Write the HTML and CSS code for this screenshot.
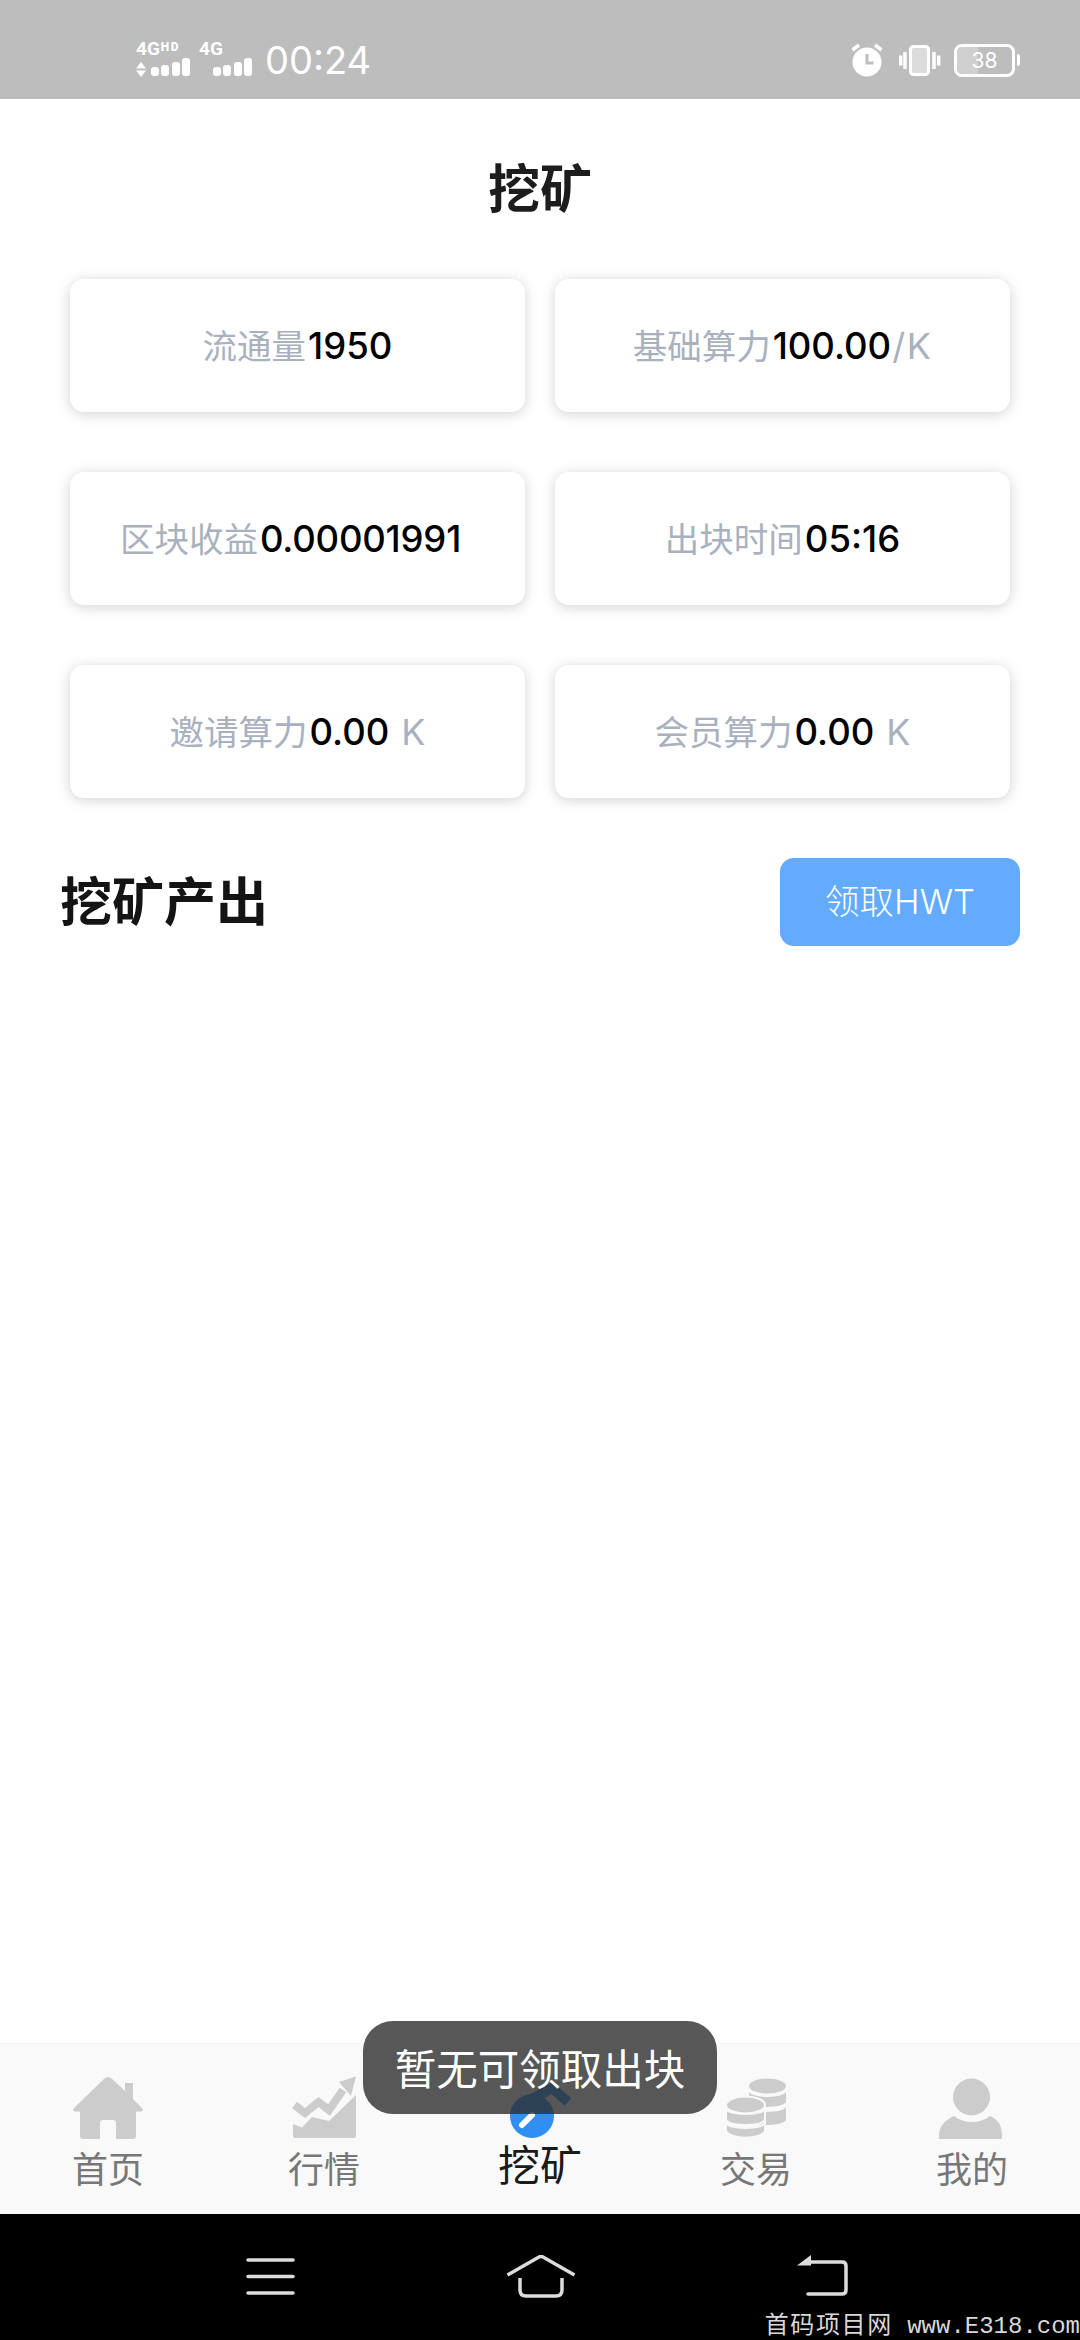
FILE: index.html
```html
<!DOCTYPE html>
<html lang="zh">
<head>
<meta charset="utf-8">
<title>挖矿</title>
<link rel="stylesheet" href="styles.css">
</head>
<body>
<div class="page">
  <header class="status">
    <div class="status-left">
      <div class="sig">
        <div class="sig-top">4G<sup>HD</sup></div>
        <div class="bars"><svg class="updown" viewBox="0 0 10 15"><path d="M5 0l5 6.500H0zM5 15l5-6.500H0z"/></svg><i class="b1"></i><i class="b2"></i><i class="b3"></i><i class="b4"></i></div>
      </div>
      <div class="sig sig2">
        <div class="sig-top">4G</div>
        <div class="bars"><i class="b1"></i><i class="b2"></i><i class="b3"></i><i class="b4"></i></div>
      </div>
      <span class="time">00:24</span>
    </div>
    <div class="status-right">
      <svg class="ic-alarm" viewBox="0 0 32 34"><circle cx="16" cy="19" r="14.500" fill="#fff"/><path d="M16 11v9h6.500" fill="none" stroke="#bdbdbd" stroke-width="3"/><path d="M1.500 7l6.500-5M30.500 7L24 2" stroke="#fff" stroke-width="3.500" fill="none"/></svg>
      <svg class="ic-vib" viewBox="0 0 42 31"><rect x="11.500" y="1.500" width="18" height="28" rx="3" fill="#dcdcdc" stroke="#fff" stroke-width="3"/><path d="M6 7v17M1.700 10.500v10M35 7v17M39.700 10.500v10" stroke="#fff" stroke-width="3.500" fill="none"/></svg>
      <div class="battery"><div class="batt-body"><span class="batt-fill"></span><span class="batt-num">38</span></div><span class="batt-tip"></span></div>
    </div>
  </header>

  <main class="main">
    <h1 class="title">挖矿</h1>
    <section class="grid">
      <div class="card"><span class="label">流通量</span><span class="value">1950</span></div>
      <div class="card"><span class="label">基础算力</span><span class="value">100.00</span><span class="unit slash">/K</span></div>
      <div class="card"><span class="label">区块收益</span><span class="value long">0.00001991</span></div>
      <div class="card"><span class="label">出块时间</span><span class="value">05:16</span></div>
      <div class="card"><span class="label">邀请算力</span><span class="value">0.00</span><span class="unit sp">K</span></div>
      <div class="card"><span class="label">会员算力</span><span class="value">0.00</span><span class="unit sp">K</span></div>
    </section>
    <section class="output">
      <h2 class="output-title">挖矿产出</h2>
      <button class="claim">领取HWT</button>
    </section>
  </main>

  <nav class="tabs">
    <div class="tab">
      <svg class="tab-ic" viewBox="0 0 70 64"><path fill="#ccc" d="M35 1q2 0 3.500 1.500L52 15V7h8v16l9 9q2 3-1 3.500H63V60q0 3-3 3H43V47q0-3-3-3H30q-3 0-3 3v16H10q-3 0-3-3V35.500H2q-3-.5-1-3.500L31.500 2.500Q33 1 35 1z"/></svg>
      <span class="tab-label">首页</span>
    </div>
    <div class="tab">
      <svg class="tab-ic" viewBox="0 0 70 64"><path fill="#ccc" d="M4 48l9 3.500L23 41l17 4 27-26v41q0 2-2 2H6q-2 0-2-2z"/><path d="M5.500 29L16 37l13.500-11L40 34l14-20" fill="none" stroke="#ccc" stroke-width="8"/><path fill="#ccc" d="M67 .5L50 6l12 14z"/></svg>
      <span class="tab-label">行情</span>
    </div>
    <div class="tab active">
      <svg class="tab-ic" viewBox="0 0 70 64"><path d="M25 24l22-12 16 14" fill="none" stroke="#2f8ff3" stroke-width="10"/><circle cx="27" cy="40" r="22" fill="#2f8ff3"/><path d="M17 49l10-10" stroke="#fff" stroke-width="6" stroke-linecap="round"/></svg>
      <span class="tab-label">挖矿</span>
    </div>
    <div class="tab">
      <svg class="tab-ic" viewBox="0 0 70 64"><g fill="#ccc"><ellipse cx="46.500" cy="10" rx="18.500" ry="7.500"/><path d="M28 16c4 6.500 33 6.500 37 0v10c-4 6.500-33 6.500-37 0zM28 31c4 6.500 33 6.500 37 0v13c-4 6.500-33 6.500-37 0z"/></g><g fill="#ccc" stroke="#f9f9f9" stroke-width="2"><ellipse cx="24.500" cy="29" rx="19.500" ry="8.500"/><path d="M5 33c4 6.500 35 6.500 39 0v11c-4 6.500-35 6.500-39 0zM5 47c4 6.500 35 6.500 39 0v8c-4 9-35 9-39 0z"/></g></svg>
      <span class="tab-label">交易</span>
    </div>
    <div class="tab">
      <svg class="tab-ic" viewBox="0 0 70 64"><circle cx="34.500" cy="21" r="18.500" fill="#ccc"/><path fill="#ccc" d="M2 63v-3c0-10 6-16 15-20 10 8 26 8 36 0 9 4 12 10 12 20v3z"/></svg>
      <span class="tab-label">我的</span>
    </div>
  </nav>

  <footer class="navbar">
    <svg class="nav-ic nav-menu" viewBox="0 0 49 37"><path d="M2 2h45M2 18.500h45M2 35h45" stroke="#dcdcdc" stroke-width="3.500" stroke-linecap="round"/></svg>
    <svg class="nav-ic" viewBox="0 0 70 43"><path d="M1.500 20L33 2q2-1 4 0l31.500 18M14 23v12q0 6 6 6h30q6 0 6-6V23" fill="none" stroke="#dcdcdc" stroke-width="3.500"/></svg>
    <svg class="nav-ic nav-back" viewBox="0 0 51 42"><path d="M12 7h33q4 0 4 4v24q0 4-4 4H11" fill="none" stroke="#dcdcdc" stroke-width="3.500" stroke-linecap="round"/><path d="M14 0v10.500H0z" fill="#dcdcdc"/></svg>
  </footer>

  <div class="toast">暂无可领取出块</div>
  <div class="watermark"><span class="wm-cn">首码项目网</span> www.E318.com</div>
</div>
</body>
</html>
```
FILE: styles.css
```css
* { box-sizing: border-box; }
html, body { margin: 0; padding: 0; }
body {
  width: 1080px;
  height: 2340px;
  background: #fff;
  font-family: "Inter", "Noto Sans CJK SC", sans-serif;
}
.page {
  position: relative;
  width: 1080px;
  height: 2340px;
  display: flex;
  flex-direction: column;
  overflow: hidden;
}

/* status bar */
.status {
  height: 99px;
  flex: none;
  background: #bdbdbd;
  display: flex;
  justify-content: space-between;
  padding: 40px 60px 0 136px;
  color: #fff;
}
.status-left { display: flex; align-items: flex-start; height: 40px; }
.sig { width: 54px; margin-right: 9px; display: flex; flex-direction: column; }
.sig2 { width: 53px; margin-right: 14px; }
.sig-top {
  font: 700 19px/18px "Roboto", sans-serif;
  height: 18px;
  white-space: nowrap;
}
.sig-top sup { font-size: 12px; font-weight: 900; line-height: 12px; vertical-align: 4px; letter-spacing: 1.5px; margin-left: 1px; }
.bars { display: flex; align-items: flex-end; gap: 2.5px; height: 18px; justify-content: flex-end; }
.bars i { display: block; width: 8px; background: #fff; border-radius: 3px; }
.bars .b1 { height: 9px; }
.bars .b2 { height: 11px; }
.bars .b3 { height: 14px; }
.bars .b4 { height: 18px; }
.updown { width: 10px; height: 15px; fill: #fff; margin-right: auto; margin-bottom: -1px; }
.time {
  font: 400 38px/40px "Inter", sans-serif;
  margin-left: -1px;
}
.status-right { display: flex; align-items: center; height: 40px; }
.ic-alarm { width: 32px; height: 34px; margin-right: 16px; }
.ic-vib { width: 42px; height: 31px; margin-right: 13px; }
.battery { display: flex; align-items: center; gap: 2px; }
.batt-body {
  position: relative;
  width: 61px;
  height: 33px;
  border: 3px solid #fff;
  border-radius: 8px;
  display: flex;
  align-items: center;
  justify-content: center;
  overflow: hidden;
}
.batt-fill { position: absolute; left: 0; top: 0; bottom: 0; width: 38%; background: #d0d0d0; }
.batt-num { position: relative; font: 400 21px/1 "Inter", sans-serif; color: #fff; }
.batt-tip { width: 3px; height: 12px; background: #fff; border-radius: 0 2px 2px 0; }

/* main */
.main { flex: 1; padding: 0 60px; }
.title {
  margin: 0;
  height: 180px;
  padding-top: 54px;
  font: 700 52px/66px "Noto Sans CJK SC", sans-serif;
  color: #1d1d1d;
  text-align: center;
}
.grid {
  display: grid;
  grid-template-columns: 455px 455px;
  column-gap: 30px;
  row-gap: 60px;
  padding-left: 10px;
}
.card {
  height: 133px;
  border-radius: 14px;
  background: #fff;
  box-shadow: 0 2px 14px rgba(0, 0, 0, .18);
  display: flex;
  align-items: center;
  justify-content: center;
  line-height: 50px;
  white-space: nowrap;
}
.label { color: #a9b1bf; font: 400 34.500px/50px "Noto Sans CJK SC", sans-serif; margin-right: 2px; margin-bottom: 4px; }
.value { color: #000; font-size: 36.500px; font-weight: 500; }
.value.long { letter-spacing: -.2px; margin-right: 14px; }
.unit { color: #a9b1bf; font-size: 36px; }
.unit.slash { letter-spacing: 1.500px; margin-left: 1px; }
.unit.sp { margin-left: 12px; }

.output {
  display: flex;
  justify-content: space-between;
  align-items: center;
  margin-top: 60px;
  height: 88px;
}
.output-title {
  margin: 0 0 6px;
  font: 700 52px/66px "Noto Sans CJK SC", sans-serif;
  color: #141414;
}
.claim {
  width: 240px;
  height: 88px;
  border: 0;
  border-radius: 14px;
  background: #62abff;
  color: #fff;
  font: 300 34.500px/1 "Inter", "Noto Sans CJK SC", sans-serif;
  padding: 0;
}

/* tabs */
.tabs {
  height: 171px;
  flex: none;
  background: #f9f9f9;
  border-top: 1px solid #f4f4f4;
  display: grid;
  grid-template-columns: repeat(5, 1fr);
}
.tab {
  display: flex;
  flex-direction: column;
  align-items: center;
  padding-top: 32px;
}
.tab-ic { width: 70px; height: 64px; display: block; }
.tab-label {
  margin-top: 2px;
  font: 400 36px/50px "Noto Sans CJK SC", sans-serif;
  color: #777;
}
.active .tab-label { color: #1a1a1a; font-size: 42px; margin-top: -2px; }

/* navigation */
.navbar {
  height: 126px;
  flex: none;
  background: #000;
  display: grid;
  grid-template-columns: 49px 70px 51px;
  column-gap: 211px;
  align-items: start;
  padding: 41px 0 0 246px;
}
.nav-ic { display: block; width: 100%; }
.nav-menu { margin-top: 3px; }
.nav-back { margin-left: 10px; }

/* overlay */
.toast {
  position: absolute;
  left: 363px;
  top: 2021px;
  width: 354px;
  height: 93px;
  border-radius: 30px;
  background: rgba(46, 46, 46, .8);
  color: #fff;
  font: 400 41.500px/93px "Noto Sans CJK SC", sans-serif;
  text-align: center;
}
.watermark {
  position: absolute;
  right: 0;
  bottom: -2px;
  font: 400 24px/30px "Liberation Mono", "Noto Sans CJK SC", monospace;
  color: #d8d8d8;
  white-space: nowrap;
}
.wm-cn { letter-spacing: 1.600px; }
```
